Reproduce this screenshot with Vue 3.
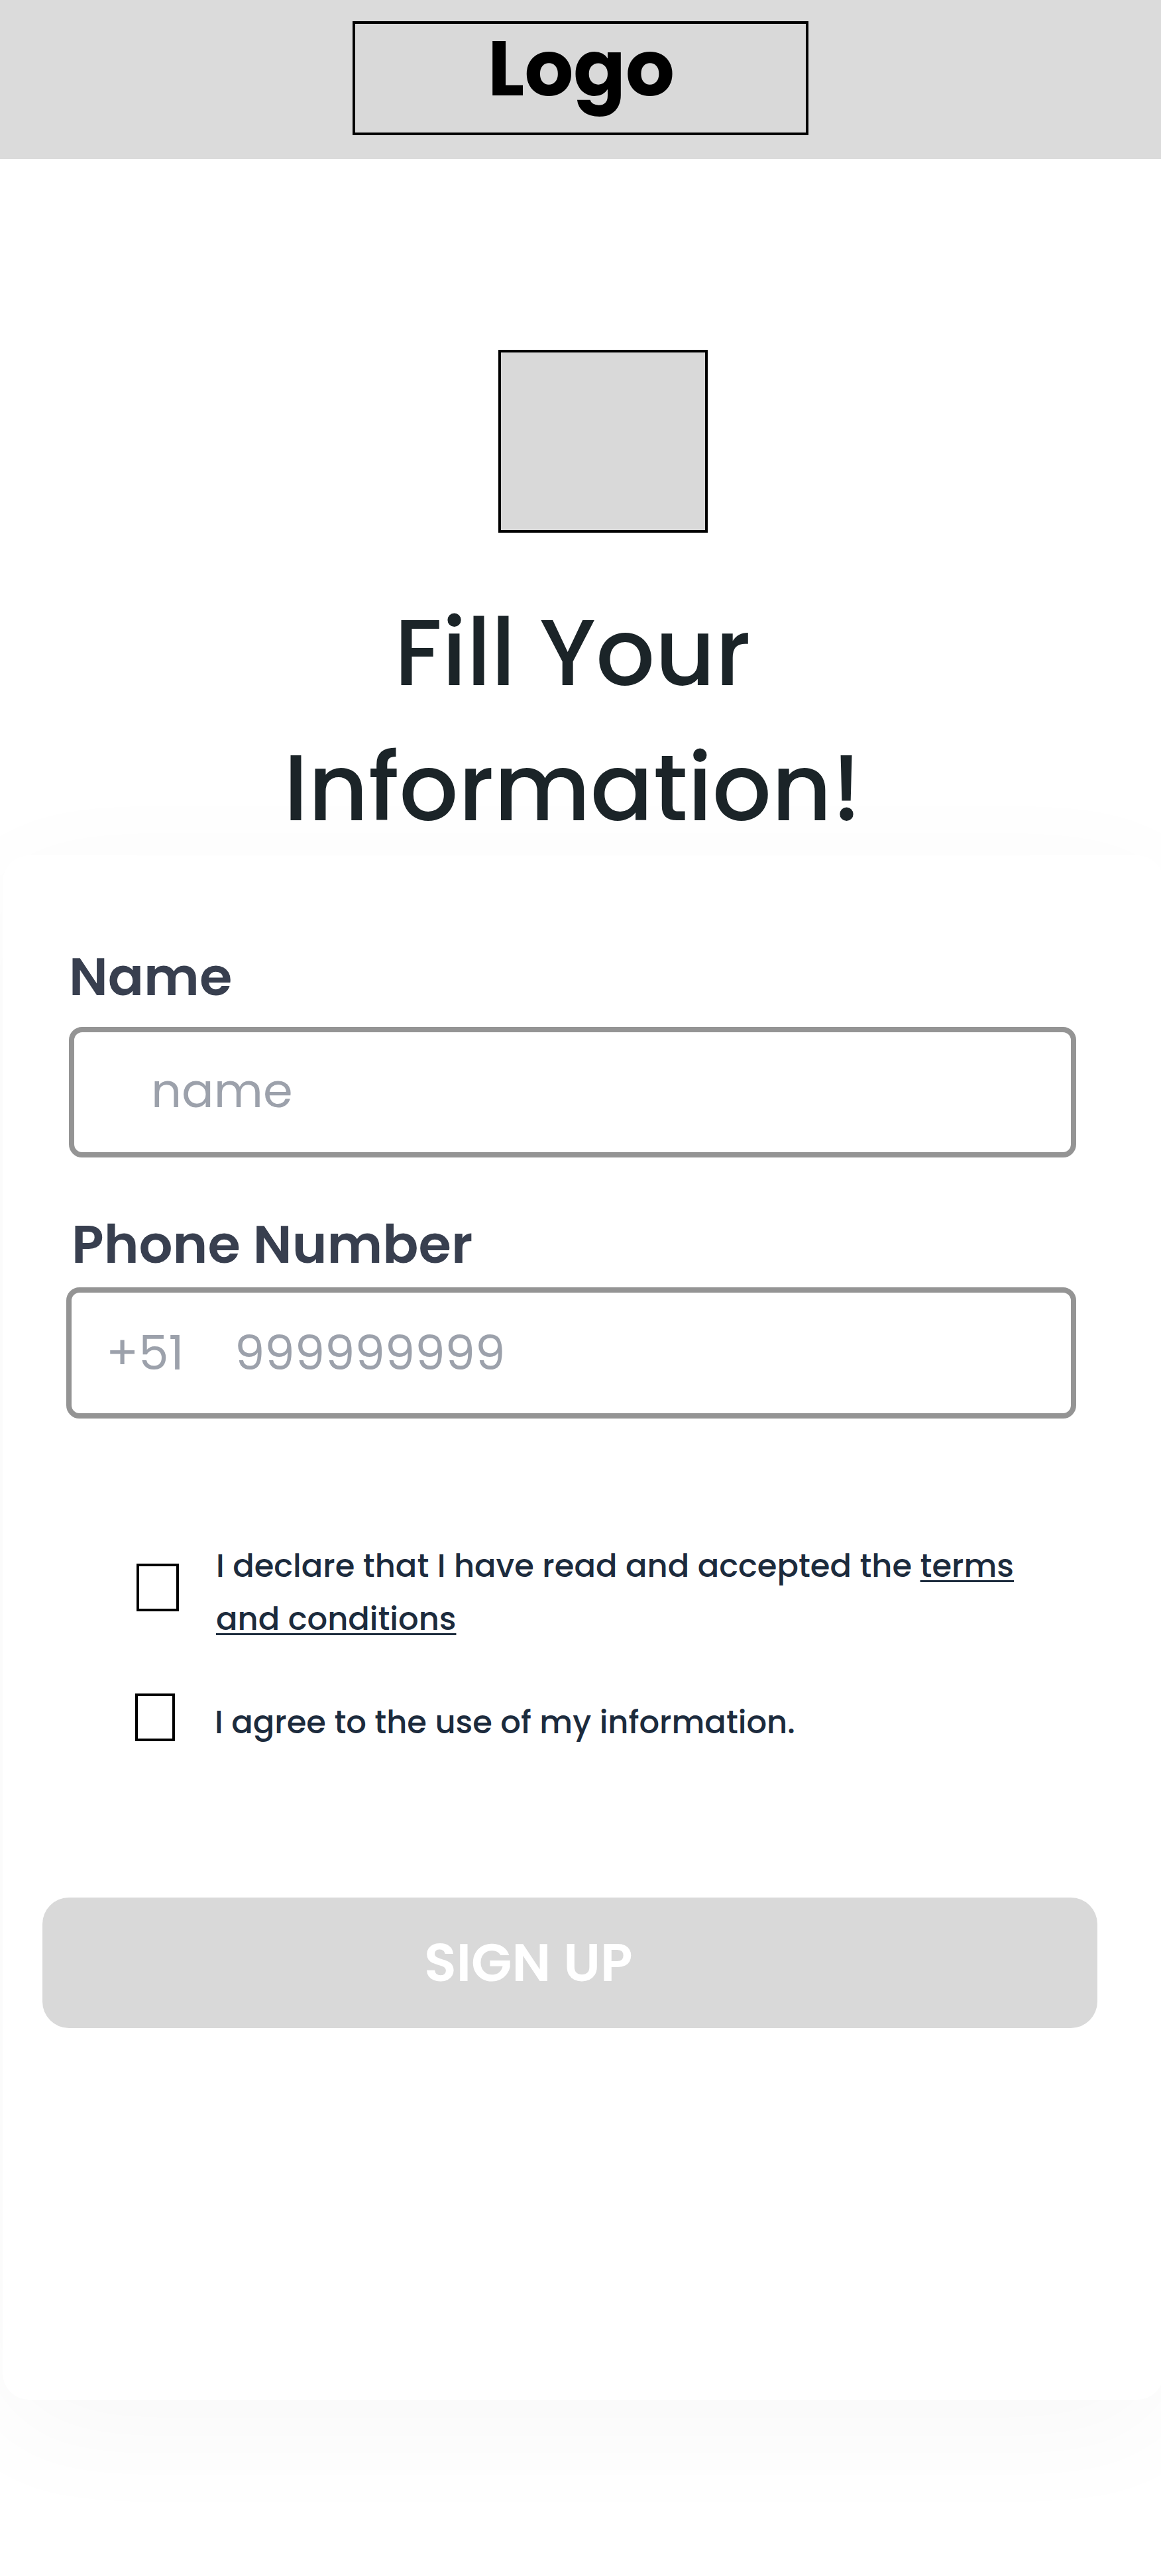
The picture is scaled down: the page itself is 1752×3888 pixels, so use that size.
<script setup>
import { ref } from 'vue'

const name = ref('')
const phone = ref('')
const terms = ref(false)
const usage = ref(false)
</script>

<template>
  <main class="page">
    <header class="topbar">
      <div class="logo">Logo</div>
    </header>

    <div class="picture"></div>
    <h1 class="title">Fill Your<br />Information!</h1>

    <form class="card" @submit.prevent>
      <label class="label" for="name">Name</label>
      <div class="field field-name">
        <input id="name" v-model="name" class="input" type="text" placeholder="name" />
      </div>

      <label class="label label-phone" for="phone">Phone Number</label>
      <div class="field field-phone">
        <span class="prefix">+51</span>
        <input id="phone" v-model="phone" class="input" type="text" placeholder="999999999" />
      </div>

      <div class="consent consent-terms">
        <input id="terms" v-model="terms" class="check" type="checkbox" />
        <label class="consent-text" for="terms">
          <span class="line">I declare that I have read and accepted the <a class="link">terms</a></span>
          <span class="line"><a class="link">and conditions</a></span>
        </label>
      </div>
      <div class="consent consent-usage">
        <input id="usage" v-model="usage" class="check check-narrow" type="checkbox" />
        <label class="consent-text" for="usage">I agree to the use of my information.</label>
      </div>

      <button class="submit" type="submit">SIGN UP</button>
    </form>
  </main>
</template>

<style>
body {
  margin: 0;
  background: #fff;
}
</style>

<style scoped>
.page {
  box-sizing: border-box;
  width: 1752px;
  height: 3888px;
  overflow: hidden;
  background: #fff;
  font-family: Poppins, Inter, sans-serif;
}

.topbar {
  box-sizing: border-box;
  height: 240px;
  padding-top: 32px;
  background: #dbdbdb;
}

.logo {
  box-sizing: border-box;
  width: 688px;
  height: 172px;
  margin: 0 auto;
  padding-left: 2px;
  border: 4px solid #000;
  background: #d9d9d9;
  color: #000;
  font-size: 116px;
  font-weight: 700;
  line-height: 135px;
  text-align: center;
}

.picture {
  box-sizing: border-box;
  width: 316px;
  height: 276px;
  margin: 288px 0 0 752px;
  border: 4px solid #000;
  background: #d9d9d9;
}

.title {
  width: 1728px;
  margin: 79px 0 0;
  color: #1b2428;
  font-size: 140px;
  font-weight: 500;
  line-height: 204px;
  text-align: center;
}

.card {
  box-sizing: border-box;
  width: 1752px;
  height: 2331px;
  margin: 0 0 0 4px;
  padding: 123px 0 0;
  border-radius: 40px;
  background: #fff;
  box-shadow: 0 40px 192px rgba(0, 0, 0, 0.035);
}

.label {
  display: block;
  margin-left: 100px;
  color: #383f4f;
  font-size: 80px;
  font-weight: 600;
  line-height: 120px;
}

.label-phone {
  margin: 71px 0 0 104px;
}

.field {
  display: flex;
  align-items: center;
  box-sizing: border-box;
  border: 8px solid #949494;
  border-radius: 20px;
  color: #9ca1ab;
  font-size: 72px;
  line-height: 108px;
}

.field-name {
  width: 1520px;
  height: 197px;
  margin: 16px 0 0 100px;
  padding: 0 20px 5px 116px;
}

.field-phone {
  width: 1524px;
  height: 198px;
  margin: 5px 0 0 96px;
  padding: 0 20px 0 52px;
}

.prefix {
  width: 194px;
}

.input {
  flex: 1;
  min-width: 0;
  height: 108px;
  padding: 0;
  border: 0;
  outline: 0;
  background: transparent;
  color: inherit;
  font: inherit;
}

.input::placeholder {
  color: #9ca1ab;
  opacity: 1;
}

.consent {
  display: flex;
  align-items: flex-start;
}

.consent-terms {
  margin: 183px 0 0 202px;
}

.consent-usage {
  margin: 72px 0 0 200px;
}

.check {
  appearance: none;
  flex: none;
  box-sizing: border-box;
  width: 64px;
  height: 72px;
  margin: 36px 56px 0 0;
  border: 4px solid #000;
}

.check-narrow {
  width: 60px;
  margin-top: 0;
  margin-right: 60px;
}

.consent-text {
  width: 1220px;
  color: #1c2b3d;
  font-size: 48px;
  font-weight: 500;
  line-height: 80px;
}

.consent-usage .consent-text {
  padding-top: 4px;
}

.line {
  display: block;
  white-space: nowrap;
}

.link {
  text-decoration: underline;
  text-decoration-thickness: 2.5px;
  text-decoration-skip-ink: none;
  text-underline-offset: 5px;
}

.submit {
  display: block;
  width: 1592px;
  height: 197px;
  margin: 224px 0 0 60px;
  padding: 0 0 2px 576px;
  border: 0;
  border-radius: 40px;
  background: #d9d9d9;
  color: #fff;
  font: 600 80px/120px Poppins, Inter, sans-serif;
  text-align: left;
}
</style>
